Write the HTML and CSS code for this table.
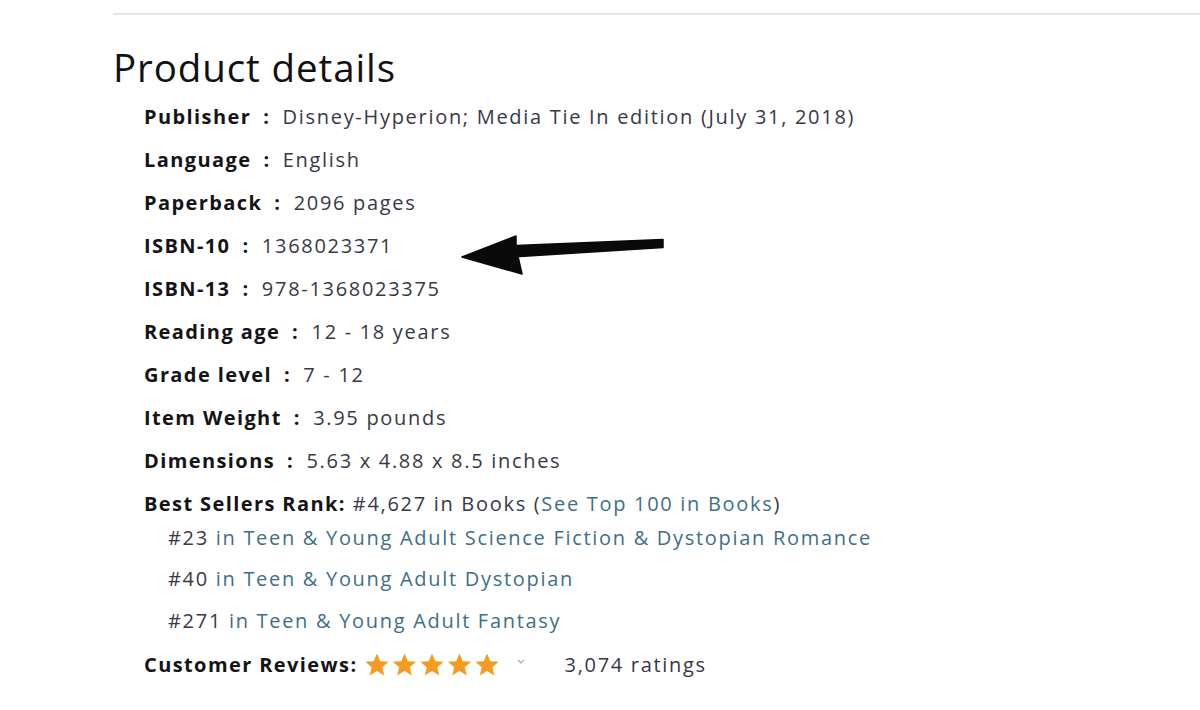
FILE: index.html
```html
<!DOCTYPE html>
<html>
<head>
<meta charset="utf-8">
<link rel="stylesheet" href="styles.css">
</head>
<body>
<div class="page">
  <hr class="sep">
  <h2 class="title">Product details</h2>
  <ul class="details">
    <li><span class="lbl">Publisher</span><span class="colon">:</span><span class="val">Disney-Hyperion; Media Tie In edition (July 31, 2018)</span></li>
    <li><span class="lbl">Language</span><span class="colon">:</span><span class="val">English</span></li>
    <li><span class="lbl">Paperback</span><span class="colon">:</span><span class="val">2096 pages</span></li>
    <li><span class="lbl">ISBN-10</span><span class="colon">:</span><span class="val">1368023371</span></li>
    <li><span class="lbl">ISBN-13</span><span class="colon">:</span><span class="val">978-1368023375</span></li>
    <li><span class="lbl">Reading age</span><span class="colon">:</span><span class="val">12 - 18 years</span></li>
    <li><span class="lbl">Grade level</span><span class="colon">:</span><span class="val">7 - 12</span></li>
    <li><span class="lbl">Item Weight</span><span class="colon">:</span><span class="val">3.95 pounds</span></li>
    <li><span class="lbl">Dimensions</span><span class="colon">:</span><span class="val">5.63 x 4.88 x 8.5 inches</span></li>
    <li class="rank"><span class="lbl">Best Sellers Rank:</span> <span class="val">#4,627 in Books (<span class="link">See Top 100 in Books</span>)</span>
      <ul class="subranks">
        <li>#23 <span class="link">in Teen &amp; Young Adult Science Fiction &amp; Dystopian Romance</span></li>
        <li>#40 <span class="link">in Teen &amp; Young Adult Dystopian</span></li>
        <li>#271 <span class="link">in Teen &amp; Young Adult Fantasy</span></li>
      </ul>
    </li>
    <li class="reviews"><span class="lbl">Customer Reviews:</span>
      <span class="stars">
        <svg width="138" height="26" viewBox="0 0 138 26">
          <defs>
            <path id="st" d="M13 1.5 L16.3 9.2 L24.6 9.8 L18.3 15.2 L20.3 23.4 L13 19 L5.7 23.4 L7.7 15.2 L1.4 9.8 L9.7 9.2 Z"/>
          </defs>
          <use href="#st" x="0" fill="#f39c1f"/>
          <use href="#st" x="27.5" fill="#f39c1f"/>
          <use href="#st" x="55" fill="#f39c1f"/>
          <use href="#st" x="82.5" fill="#f39c1f"/>
          <use href="#st" x="110" fill="#f39c1f"/>
        </svg>
      </span>
      <span class="chev"><svg width="10" height="8" viewBox="0 0 10 8"><path d="M2 2 L5 5 L8 2" fill="none" stroke="#b5b5b5" stroke-width="1.5"/></svg></span>
      <span class="ratings">3,074 ratings</span>
    </li>
  </ul>
  <svg class="arrow" width="220" height="50" viewBox="0 0 220 50">
    <path d="M203 7.5 L203 15.5 L60 24.5 L58 24.5 L62 42 L2 25 L56 4 L56 13.5 L203 7.5 Z" fill="#0a0a0a" stroke="#0a0a0a" stroke-width="1.5" stroke-linejoin="round"/>
  </svg>
</div>
</body>
</html>
```
FILE: styles.css
```css
* { box-sizing: border-box; }
html, body { margin: 0; padding: 0; background: #ffffff; }
body {
  font-family: "Open Sans", "DejaVu Sans", sans-serif;
  color: #383846;
}
.page {
  position: relative;
  padding-left: 113px;
  padding-top: 13px;
}
.sep {
  margin: 0;
  border: 0;
  border-top: 2px solid #e3e6e6;
}
.title {
  margin: 28px 0 0 0;
  font-weight: 400;
  font-size: 38.5px;
  line-height: 48px;
  color: #111111;
  letter-spacing: 0.9px;
}
.details {
  list-style: none;
  margin: 13px 0 0 0;
  padding: 0 0 0 31px;
  font-size: 20px;
  letter-spacing: 1.7px;
}
.details > li {
  line-height: 26px;
  margin-bottom: 17px;
}
.lbl {
  font-weight: 700;
  color: #141418;
  letter-spacing: 1.4px;
}
.colon {
  font-weight: 700;
  color: #141418;
  margin: 0 12px 0 12px;
}
.val { color: #383846; }
.link { color: #3e6f88; }
.subranks {
  list-style: none;
  margin: 8px 0 0 0;
  padding: 0 0 0 24px;
}
.subranks li {
  line-height: 26px;
  margin-bottom: 16px;
  color: #383846;
}
.subranks li:first-child { margin-bottom: 15px; }
.details > li.rank { margin-bottom: 0; }
.subranks li:last-child { margin-bottom: 18px; }
.reviews {
  display: flex;
  align-items: center;
}
.stars { display: inline-flex; margin-left: 6px; }
.stars svg { display: block; }
.chev { display: inline-flex; margin-left: 14px; margin-top: -6px; }
.ratings { margin-left: 39px; color: #383846; }
.arrow {
  position: absolute;
  left: 460px;
  top: 232px;
}
```
